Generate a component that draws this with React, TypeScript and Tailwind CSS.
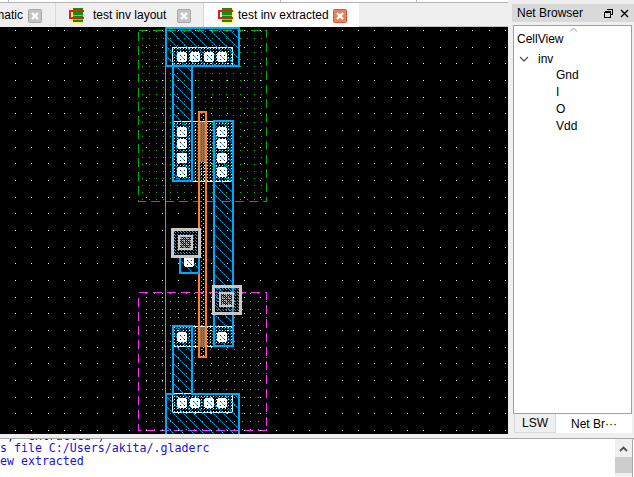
const sans = "font-['Liberation_Sans',sans-serif]";

const gridDots: { x: number; y: number }[] = [];
for (let r = 0; r < 25; r++) {
  for (let c = 0; c < 31; c++) {
    gridDots.push({ x: Math.round(15 + c * 16.33), y: Math.round(30 + r * 16.67) });
  }
}

const stripX = [182, 195, 209, 222];
const sideY = [132, 144, 158, 172];

function Contact({ x, y }: { x: number; y: number }) {
  return (
    <g>
      <rect x={x - 5} y={y - 4} width={10} height={8} fill="#fff" />
      <rect x={x - 4} y={y - 5} width={8} height={10} fill="#fff" />
      <rect x={x - 2} y={y - 2} width={1} height={1} fill="#222" />
      <rect x={x + 2} y={y - 2} width={1} height={1} fill="#222" />
      <rect x={x - 2} y={y + 2} width={1} height={1} fill="#222" />
      <rect x={x + 2} y={y + 2} width={1} height={1} fill="#222" />
      <path d={`M${x - 1} ${y - 1}L${x + 2} ${y + 2}`} stroke="#30b8f8" />
    </g>
  );
}

function Via({ x, y }: { x: number; y: number }) {
  return (
    <g>
      <rect x={x} y={y} width={27} height={27} fill="url(#viaDots)" stroke="#c8c8c8" strokeWidth={3} />
      <rect x={x + 7} y={y + 7} width={13} height={13} fill="url(#viaCore)" stroke="#c8c8c8" strokeWidth={2} />
    </g>
  );
}

function LayoutCanvas() {
  return (
    <svg viewBox="0 27 508 407" width={508} height={407} className="block bg-black" shapeRendering="crispEdges">
      <defs>
        <pattern id="hatch" width={10} height={10} patternUnits="userSpaceOnUse">
          {[0, 2, 4, 6, 8].map((i) => (
            <rect key={i} x={i} y={i} width={1} height={1} fill="#00a8f8" />
          ))}
          {[1, 3, 5, 7, 9].map((i) => (
            <rect key={i} x={i} y={i} width={1} height={1} fill="#006ca8" />
          ))}
        </pattern>
        <pattern id="greenDots" width={7} height={7} patternUnits="userSpaceOnUse">
          <rect x={2} y={3} width={1} height={1} fill="#00c800" />
        </pattern>
        <pattern id="pinkDots" width={8} height={8} patternUnits="userSpaceOnUse">
          <rect x={2} y={5} width={1} height={1} fill="#ff40ff" />
        </pattern>
        <pattern id="diff" width={3} height={3} patternUnits="userSpaceOnUse">
          <rect x={0} y={0} width={1} height={1} fill="#f0ffff" />
          <rect x={2} y={1} width={1} height={1} fill="#008cc0" />
        </pattern>
        <pattern id="polyDots" width={4} height={4} patternUnits="userSpaceOnUse">
          <rect x={1} y={1} width={1} height={1} fill="#ff9030" />
          <rect x={3} y={3} width={1} height={1} fill="#fff0d0" />
        </pattern>
        <pattern id="gate" width={2} height={2} patternUnits="userSpaceOnUse">
          <rect width={1} height={1} fill="#a07858" />
          <rect x={1} y={1} width={1} height={1} fill="#807060" />
          <rect x={1} width={1} height={1} fill="#685848" />
          <rect y={1} width={1} height={1} fill="#907050" />
        </pattern>
        <pattern id="viaDots" width={3} height={3} patternUnits="userSpaceOnUse">
          <rect x={0} y={0} width={1} height={1} fill="#00a8f0" />
          <rect x={1} y={1} width={1} height={1} fill="#8a8a8a" />
        </pattern>
        <pattern id="viaCore" width={2} height={2} patternUnits="userSpaceOnUse">
          <rect width={1} height={1} fill="#c8c8c8" />
          <rect x={1} y={1} width={1} height={1} fill="#0078b8" />
        </pattern>
      </defs>

      <rect x={138.5} y={30.5} width={128} height={171} fill="url(#greenDots)" stroke="#00b000" strokeDasharray="9 5" />
      <rect x={138.5} y={292.5} width={128} height={138} fill="url(#pinkDots)" stroke="#ff30ff" strokeDasharray="9 5" />

      {gridDots.map((d) => (
        <rect key={`${d.x}-${d.y}`} x={d.x} y={d.y} width={1} height={1} fill="#fff" />
      ))}

      <rect x={165} y={66} width={1} height={328} fill="#909090" />

      {/* diffusion */}
      <rect x={172.5} y={47.5} width={60} height={19} fill="url(#diff)" stroke="#d0ffff" />
      <rect x={172.5} y={121.5} width={60} height={60} fill="url(#diff)" stroke="#d0ffff" />
      <rect x={172.5} y={326.5} width={60} height={20} fill="url(#diff)" stroke="#d0ffff" />
      <rect x={172.5} y={393.5} width={60} height={19} fill="url(#diff)" stroke="#d0ffff" />

      {/* poly */}
      <rect x={199} y={111.5} width={7} height={245} fill="url(#polyDots)" />
      <rect x={200} y={122} width={5} height={40} fill="url(#gate)" />
      <rect x={200} y={327} width={5} height={20} fill="url(#gate)" />
      <rect x={199} y={111.5} width={7} height={245} fill="none" stroke="#ff8020" strokeWidth={2} />

      {/* metal */}
      <rect x={165.5} y={28} width={73} height={38} fill="url(#hatch)" stroke="#00a8f8" strokeWidth={2} />
      <rect x={172.5} y={66} width={19} height={115} fill="url(#hatch)" stroke="#00a8f8" strokeWidth={2} />
      <rect x={213.5} y={121} width={19} height={225} fill="url(#hatch)" stroke="#00a8f8" strokeWidth={2} />
      <rect x={179.5} y={256} width={19} height={17} fill="url(#hatch)" stroke="#00a8f8" strokeWidth={2} />
      <path
        d="M172.5 326H191.5V394H238.5V436H165.5V394H172.5Z"
        fill="url(#hatch)"
        stroke="#00a8f8"
        strokeWidth={2}
      />

      {stripX.map((x) => (
        <Contact key={`t${x}`} x={x} y={57} />
      ))}
      {stripX.map((x) => (
        <Contact key={`b${x}`} x={x} y={403} />
      ))}
      {sideY.map((y) => (
        <Contact key={`l${y}`} x={182} y={y} />
      ))}
      {sideY.map((y) => (
        <Contact key={`r${y}`} x={222} y={y} />
      ))}
      <Contact x={182} y={337} />
      <Contact x={222} y={337} />
      <Contact x={189} y={262} />

      <Via x={172} y={229} />
      <Via x={213} y={286} />
    </svg>
  );
}

function CloseBox({ active = false }: { active?: boolean }) {
  return (
    <svg width={14} height={14} viewBox="0 0 14 14" className="mt-[2px] shrink-0">
      <rect x={0.5} y={0.5} width={13} height={13} rx={1} fill={active ? "#e8825c" : "#c4c4c4"} stroke={active ? "#d8543a" : "#a8a8a8"} />
      <path d="M4 4L10 10M10 4L4 10" stroke="#fff" strokeWidth={2.4} />
    </svg>
  );
}

function CellIcon() {
  return (
    <svg width={16} height={15} viewBox="0 0 16 15" shapeRendering="crispEdges" className="shrink-0">
      <rect x={3} y={0} width={12} height={15} fill="#ffff60" />
      <rect x={4} y={0} width={10} height={14} fill="#109010" />
      <rect x={4} y={3} width={10} height={1} fill="#60d060" />
      <rect x={4} y={7} width={10} height={1} fill="#60d060" />
      <rect x={4} y={11} width={10} height={1} fill="#60d060" />
      <path d="M15 3H1V10H15" fill="none" stroke="#e02020" strokeWidth={2} />
    </svg>
  );
}

export default function App() {
  return (
    <div className={`flex h-[477px] w-[634px] flex-col overflow-hidden bg-[#efefef] ${sans}`}>
      <div className="flex h-[438px] shrink-0">
        <div className="w-[508px] shrink-0">
          <div className="flex h-[2px] bg-white">
            <div className="w-[9px] border-r border-[#b4b4b4]" />
            <div className="w-[272px] border-r border-[#b4b4b4]" />
            <div className="w-[136px] border-r border-[#b4b4b4]" />
          </div>
          <div className="h-[1px] bg-[#b4b4b4]" />
          <div className="flex h-[24px] items-stretch overflow-hidden">
            <div className="flex w-[56px] shrink-0 items-center justify-end gap-[5px] border-r border-[#d8d8d8] pr-[13px]">
              <span className="whitespace-nowrap text-[12px] text-black">matic</span>
              <CloseBox />
            </div>
            <div className="flex w-[148px] shrink-0 items-center border-r border-[#d8d8d8] pl-[13px]">
              <CellIcon />
              <span className="ml-[8px] w-[84px] whitespace-nowrap text-[12px] text-black">test inv layout</span>
              <CloseBox />
            </div>
            <div className="flex w-[155px] shrink-0 items-center bg-white pl-[14px]">
              <CellIcon />
              <span className="ml-[4px] w-[95px] whitespace-nowrap text-[12px] text-black">test inv extracted</span>
              <CloseBox active />
            </div>
            <div className="flex-1 border-b border-[#c4c4c4]" />
          </div>
          <LayoutCanvas />
        </div>

        <div className="flex min-w-0 flex-1 flex-col pl-[4px] pt-[4px]">
          <div className="flex h-[18px] items-center justify-between bg-[#d9d9d9] pl-[5px] pr-[5px]">
            <span className="text-[12px] text-black">Net Browser</span>
            <div className="flex items-center gap-[7px]">
              <svg width={9} height={9} viewBox="0 0 9 9" shapeRendering="crispEdges">
                <path d="M2.5 .5H8.5V5.5H6.5M.5 3.5H6.5V8.5H.5Z M.5 2.5H6.5" fill="none" stroke="#000" />
              </svg>
              <svg width={9} height={9} viewBox="0 0 9 9">
                <path d="M1 1L8 8M8 1L1 8" stroke="#000" strokeWidth={1.4} />
              </svg>
            </div>
          </div>
          <div className="ml-[1px] mr-[2px] mt-[3px] flex h-[389px] flex-col border border-[#a0a0a0] bg-white pl-[3px] text-[12px] text-black">
            <svg width={9} height={5} viewBox="0 0 9 5" className="ml-[52px] mt-[1px]">
              <path d="M1 4.5L4.5 1L8 4.5" fill="none" stroke="#9a9a9a" />
            </svg>
            <div className="-mt-[1px] h-[17px] leading-[17px]">CellView</div>
            <div className="mt-[2px] flex h-[17px] items-center gap-[9px] pl-[2px]">
              <svg width={10} height={6} viewBox="0 0 10 6">
                <path d="M1 1L5 5L9 1" fill="none" stroke="#555" strokeWidth={1.3} />
              </svg>
              <span>inv</span>
            </div>
            {["Gnd", "I", "O", "Vdd"].map((n) => (
              <div key={n} className="h-[17px] pl-[39px] leading-[17px]">
                {n}
              </div>
            ))}
          </div>
          <div className="flex h-[19px] text-[12px] text-black">
            <div className="ml-[2px] flex w-[42px] items-center justify-center border border-t-0 border-[#d8d8d8] bg-[#efefef]">LSW</div>
            <div className="flex w-[76px] items-center justify-center bg-white">Net Br···</div>
          </div>
        </div>
      </div>

      <div className="flex min-h-0 flex-1 border-t border-[#a8a8a8] bg-white">
        <div className="min-w-0 flex-1 overflow-hidden font-['DejaVu_Sans_Mono',monospace] text-[11.6px] leading-[13px] text-[#1a10d8]">
          <div className="-mt-[8px] h-[11px] whitespace-pre leading-[11px]">{" ;  extracted )"}</div>
          <div className="whitespace-pre">s file C:/Users/akita/.gladerc</div>
          <div className="whitespace-pre">ew extracted</div>
        </div>
        <div className="flex w-[18px] shrink-0 flex-col items-center border-r border-[#a8a8a8] bg-[#f0f0f0]">
          <svg width={9} height={6} viewBox="0 0 9 6" className="mt-[7px]">
            <path d="M1 5L4.5 1.5L8 5" fill="none" stroke="#505050" strokeWidth={1.8} />
          </svg>
          <div className="mt-[5px] h-[16px] w-full bg-[#cdcdcd]" />
        </div>
        <div className="w-[1px] shrink-0 bg-white" />
      </div>
    </div>
  );
}
